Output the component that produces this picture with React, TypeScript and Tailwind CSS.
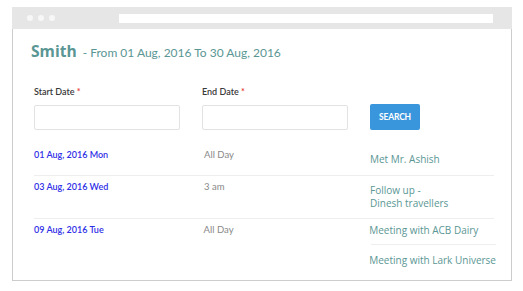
import React from 'react';

type Row = {
  date: string;
  time: string;
  events: { lines: string[]; pad: string }[];
};

const rows: Row[] = [
  { date: '01 Aug, 2016 Mon', time: 'All Day', events: [{ lines: ['Met Mr. Ashish'], pad: 'pt-[9px] pb-[9px]' }] },
  {
    date: '03 Aug, 2016 Wed',
    time: '3 am',
    events: [{ lines: ['Follow up -', 'Dinesh travellers'], pad: 'pt-[8px] pb-[8px]' }],
  },
  {
    date: '09 Aug, 2016 Tue',
    time: 'All Day',
    events: [
      { lines: ['Meeting with ACB Dairy'], pad: 'pt-[5px] pb-[7px]' },
      { lines: ['Meeting with Lark Universe'], pad: 'pt-[9px] pb-[6px]' },
    ],
  },
];

const Field: React.FC<{ label: string }> = ({ label }) => (
  <div className="w-[146px]">
    <div className="text-[9px] text-[#3a3a3a] font-semibold leading-[10px] mb-[8px]">
      {label} <span className="text-[#e53935]">*</span>
    </div>
    <div className="h-[25px] border border-[#e2e2e2] rounded-[2px] bg-white" />
  </div>
);

export default function App() {
  return (
    <div className="w-[523px] h-[291px] bg-white pt-[7px] pl-[12px] font-['Lato',sans-serif]">
      <div className="w-[500px] h-[274px] flex flex-col">
        {/* browser chrome */}
        <div className="shrink-0 h-[22px] bg-[#e6e6e6] flex items-center px-[15px]">
          <div className="flex gap-[5px]">
            <span className="w-[6px] h-[6px] rounded-full bg-[#f7f7f7]" />
            <span className="w-[6px] h-[6px] rounded-full bg-[#f7f7f7]" />
            <span className="w-[6px] h-[6px] rounded-full bg-[#f7f7f7]" />
          </div>
          <div className="ml-[64px] w-[374px] h-[9px] bg-white" />
        </div>

        <div className="flex-1 min-h-0 border border-t-0 border-[#cccccc] pl-[21px] pr-[17px]">
          <div className="mt-[11px] h-[22px] -ml-[3px] flex items-baseline text-[#5a9694]">
            <span className="font-['Open_Sans',sans-serif] text-[15.6px] leading-[22px] font-bold">Smith</span>
            <span className="ml-[6px] text-[12px]">- From 01 Aug, 2016 To 30 Aug, 2016</span>
          </div>

          <div className="mt-[25px] flex items-end gap-[22px]">
            <Field label="Start Date" />
            <Field label="End Date" />
            <button className="w-[50px] h-[26px] bg-[#3a96dc] rounded-[2px] text-white text-[8.5px] font-bold tracking-[-0.2px]">
              SEARCH
            </button>
          </div>

          <div className="mt-[14px]">
            {rows.map((r, i) => (
              <div key={i} className={`flex ${i < rows.length - 1 ? 'border-b border-[#eeeeee]' : ''}`}>
                <div className="w-[170px] pt-[4px] leading-[13px] text-[9px] text-[#2f2fe6] font-semibold">{r.date}</div>
                <div className="w-[166px] pt-[4px] leading-[13px] text-[9.5px] text-[#888888]">{r.time}</div>
                <div className="flex-1 font-['Open_Sans',sans-serif] text-[10px] leading-[13px] text-[#5a9694] whitespace-nowrap">
                  {r.events.map((ev, j) => (
                    <div key={j} className={`${j > 0 ? 'border-t border-[#eeeeee] ml-[2px] -mr-[2px]' : ''} ${ev.pad}`}>
                      {ev.lines.map((line, k) => (
                        <div key={k} className={j > 0 ? '-ml-[2px]' : ''}>
                          {line}
                        </div>
                      ))}
                    </div>
                  ))}
                </div>
              </div>
            ))}
          </div>
        </div>
      </div>
    </div>
  );
}
